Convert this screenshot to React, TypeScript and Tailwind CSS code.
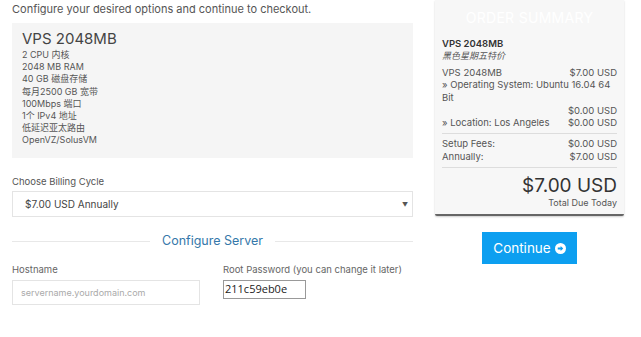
import React from "react";

const font = { fontFamily: '"Inter", "Noto Sans CJK SC", sans-serif' };

export default function App() {
  return (
    <div className="w-[641px] h-[337px] bg-white overflow-hidden text-[#555]" style={font}>
      <div className="flex gap-[22px] pl-[12px]">
        <div className="w-[401px] flex flex-col">
          <div className="h-[23px] text-[11px] leading-[19px] text-[#555]">
            Configure your desired options and continue to checkout.
          </div>
          <div className="bg-[#f5f5f5] h-[135px] px-[10px] pt-[7px]">
            <div className="text-[15px] leading-[18px] text-[#444]">VPS 2048MB</div>
            <div className="text-[9px] leading-[12.2px] text-[#555] mt-[1px]">
              <div>2 CPU 内核</div>
              <div>2048 MB RAM</div>
              <div>40 GB 磁盘存储</div>
              <div>每月2500 GB 宽带</div>
              <div>100Mbps 端口</div>
              <div>1个 IPv4 地址</div>
              <div>低延迟亚太路由</div>
              <div>OpenVZ/SolusVM</div>
            </div>
          </div>
          <div className="mt-[18px] text-[9.5px] leading-[12px] text-[#555]">Choose Billing Cycle</div>
          <div className="mt-[3px] h-[26px] border border-[#e4e4e4] flex items-center justify-between pl-[12px] pr-[4px]">
            <span className="text-[10px] text-[#444]">$7.00 USD Annually</span>
            <span className="text-[6px] text-[#555]">▼</span>
          </div>
          <div className="mt-[16px] flex items-center gap-[12px]">
            <div className="flex-1 h-px bg-[#e8e8e8]" />
            <div className="text-[12.5px] leading-[16px] text-[#3578aa]">Configure Server</div>
            <div className="flex-1 h-px bg-[#e8e8e8]" />
          </div>
          <div className="mt-[15px] flex gap-[23px]">
            <div className="w-[188px]">
              <div className="text-[9.5px] leading-[12px] text-[#666]">Hostname</div>
              <div className="mt-[4px] h-[25px] border border-[#e4e4e4] flex items-center pl-[8px] text-[9px] text-[#aaa]">
                servername.yourdomain.com
              </div>
            </div>
            <div>
              <div className="text-[9.5px] leading-[12px] text-[#666] whitespace-nowrap">Root Password (you can change it later)</div>
              <div
                className="mt-[4px] w-[83px] h-[19px] border border-[#999] flex items-center pl-[1px] text-[11px] text-[#222]"
                style={{ fontFamily: '"Open Sans", "DejaVu Sans", sans-serif' }}
              >
                211c59eb0e
              </div>
            </div>
          </div>
        </div>
        <div className="w-[189px] flex flex-col">
          <div className="bg-[#f7f7f7] border-b-[2px] border-[#666] shadow-[0_1px_2px_rgba(0,0,0,0.2)] px-[7px] pb-[6px] h-[216px] rounded-b-[2px]">
            <div className="h-[35px] flex items-center justify-center text-[14px] text-white tracking-[0.3px]">ORDER SUMMARY</div>
            <div className="text-[9.5px] leading-[12px] font-semibold text-[#333] mt-[3px]">VPS 2048MB</div>
            <div className="text-[9px] leading-[12px] italic text-[#555]">黑色星期五特价</div>
            <div className="text-[9.5px] leading-[12.3px] text-[#555] mt-[5px]">
              <div className="flex justify-between"><span>VPS 2048MB</span><span>$7.00 USD</span></div>
              <div className="pr-[1px]">» Operating System: Ubuntu 16.04 64 Bit</div>
              <div className="flex justify-end mt-[1px]"><span>$0.00 USD</span></div>
              <div className="flex justify-between"><span>» Location: Los Angeles</span><span>$0.00 USD</span></div>
            </div>
            <div className="h-px bg-[#ddd] mt-[4px]" />
            <div className="text-[9.5px] leading-[12.3px] text-[#555] mt-[4px]">
              <div className="flex justify-between"><span>Setup Fees:</span><span>$0.00 USD</span></div>
              <div className="flex justify-between"><span>Annually:</span><span>$7.00 USD</span></div>
            </div>
            <div className="h-px bg-[#ddd] mt-[4px]" />
            <div className="text-right text-[19px] leading-[22px] text-[#333] mt-[7px]">$7.00 USD</div>
            <div className="text-right text-[9px] leading-[12px] text-[#555]">Total Due Today</div>
          </div>
          <div className="flex justify-center mt-[16px]">
            <div className="w-[95px] h-[32px] bg-[#0d9ff0] flex items-center justify-center gap-[4px] text-white text-[13.5px]">
              <span>Continue</span>
              <svg width="11" height="11" viewBox="0 0 16 16">
                <circle cx="8" cy="8" r="8" fill="white" />
                <path d="M4 6.7h4.2V4.2L12 8l-3.8 3.8V9.3H4z" fill="#0d9ff0" />
              </svg>
            </div>
          </div>
        </div>
      </div>
    </div>
  );
}
